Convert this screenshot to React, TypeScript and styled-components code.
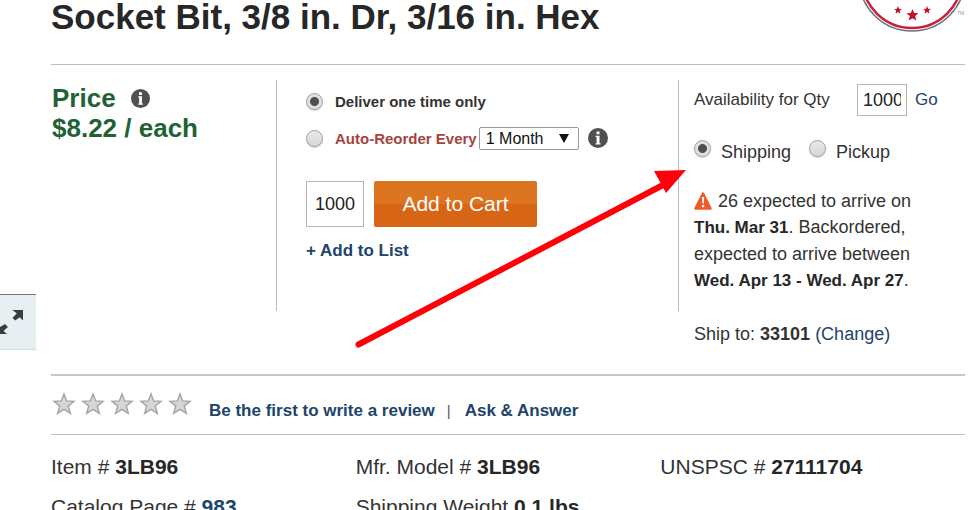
import React from "react";
import styled, { createGlobalStyle } from "styled-components";

const GlobalStyle = createGlobalStyle`
  * { box-sizing: border-box; }
  body {
    margin: 0;
    overflow: hidden;
    background: #fff;
    color: #333;
    font-family: "Liberation Sans", Arial, sans-serif;
    font-size: 18px;
  }
  button, input, select { font-family: inherit; }
`;

const Page = styled.div`
  display: flex;
  gap: 15px;
  padding-right: 10px;
`;

const Rail = styled.aside`
  flex: 0 0 36px;
  padding-top: 294px;
`;

const ExpandButton = styled.button`
  display: block;
  width: 100%;
  height: 56px;
  padding: 0;
  border: 0;
  border-top: 1px solid #777;
  border-bottom: 1px solid #d5dadd;
  background: #e8eff3;
`;

const Main = styled.main`
  position: relative;
  flex: 1;
  min-width: 0;
`;

const Header = styled.header`
  display: flex;
  justify-content: space-between;
  align-items: flex-start;
  height: 65px;
  border-bottom: 1px solid #bdbdbd;
`;

const Title = styled.h1`
  margin: 0;
  color: #272727;
  font-size: 35px;
  line-height: 34px;
`;

const BuyBox = styled.section`
  display: grid;
  grid-template-columns: 225fr 1px 401fr 1px 286fr;
  padding: 15px 0 27px;
  border-bottom: 2px solid #c8c8c8;
`;

const Divider = styled.div`
  height: 231px;
  background: #bdbdbd;
`;

const PriceColumn = styled.div`
  padding: 3px 0 0 1px;
  color: #1f6335;
  font-size: 26px;
  font-weight: bold;
  line-height: 30px;
`;

const PriceHeading = styled.div`
  display: flex;
  align-items: center;
  gap: 15px;
`;

const InfoButton = styled.button`
  display: flex;
  padding: 0;
  border: 0;
  background: none;
`;

const OrderColumn = styled.div`
  padding: 8px 0 0 29px;
`;

const OrderOption = styled.div`
  display: flex;
  align-items: center;
  height: 26px;
  margin-bottom: 11px;
`;

const OptionLabel = styled.label<{ $accent?: boolean }>`
  margin-left: 12px;
  color: ${(p) => (p.$accent ? "#a5433d" : "#333")};
  font-size: 15px;
  font-weight: bold;
`;

const Radio = styled.input.attrs({ type: "radio" })`
  appearance: none;
  flex: none;
  width: 17px;
  height: 17px;
  margin: 0;
  border: 1px solid #a0a0a0;
  border-radius: 50%;
  background: linear-gradient(#e9e9e9, #d7d7d7);
  box-shadow: 0 1px 1px #d0d0d0;
  &:checked {
    background: radial-gradient(circle, #505050 0 4px, #e0e0e0 5px);
  }
`;

const SelectWrap = styled.div`
  display: grid;
  grid-template-columns: 1fr 10px;
  align-items: center;
  width: 100px;
  height: 23px;
  margin: 0 9px 0 2px;
  padding-right: 9px;
  border: 1px solid #999;
  border-radius: 2px;
`;

const Select = styled.select`
  appearance: none;
  grid-area: 1 / 1 / 2 / 3;
  padding: 0 0 0 6px;
  border: 0;
  background: none;
  color: #111;
  font-size: 16px;
`;

const Caret = styled.svg`
  grid-area: 1 / 2;
  pointer-events: none;
`;

const CartRow = styled.div`
  display: flex;
  gap: 10px;
  padding-top: 19px;
`;

const QuantityInput = styled.input<{ $small?: boolean }>`
  width: ${(p) => (p.$small ? 50 : 58)}px;
  height: ${(p) => (p.$small ? 32 : 46)}px;
  padding: ${(p) => (p.$small ? "0 5px" : "0 8px")};
  border: 1px solid #b5b5b5;
  border-radius: 0;
  color: #222;
  font-size: 18px;
`;

const CartButton = styled.button`
  width: 163px;
  height: 46px;
  padding: 0;
  border: 0;
  border-radius: 2px;
  background: linear-gradient(#dd7420 50%, #d86416 50%);
  color: #fff;
  font-size: 21px;
`;

const Link = styled.a<{ $bold?: boolean; $inherit?: boolean }>`
  color: #20446a;
  font-weight: ${(p) => (p.$bold ? "bold" : "normal")};
  font-size: ${(p) => (p.$inherit ? "inherit" : "17px")};
  text-decoration: none;
`;

const ListAction = styled.div`
  margin-top: 13px;
  line-height: 20px;
`;

const ShippingColumn = styled.div`
  padding: 4px 0 0 15px;
  white-space: nowrap;
`;

const Availability = styled.div`
  display: flex;
  align-items: center;
  gap: 8px;
`;

const AvailabilityLabel = styled.label`
  width: 155px;
  font-size: 17px;
`;

const Methods = styled.div`
  display: flex;
  gap: 18px;
  margin-top: 24px;
`;

const Method = styled.div`
  display: flex;
  gap: 10px;
  height: 22px;
`;

const MethodLabel = styled.label`
  line-height: 24px;
`;

const Notice = styled.p`
  margin: 26px 0 0;
  line-height: 26px;
  strong {
    color: #272727;
    font-size: 17px;
  }
`;

const WarningIcon = styled.svg`
  margin-right: 6px;
  vertical-align: -3px;
`;

const ShipTo = styled.div`
  margin-top: 27px;
  line-height: 26px;
`;

const Reviews = styled.section`
  display: flex;
  gap: 17px;
  height: 59px;
  padding-top: 16px;
  border-bottom: 1px solid #bdbdbd;
`;

const Stars = styled.div`
  display: flex;
  gap: 5px;
  padding-left: 1px;
`;

const ReviewLinks = styled.div`
  padding-top: 6px;
  color: #555;
  line-height: 24px;
`;

const Separator = styled.span`
  margin: 0 14px 0 12px;
  font-size: 15px;
`;

const Details = styled.section`
  display: grid;
  grid-template-columns: repeat(3, 1fr);
  row-gap: 16px;
  padding-top: 20px;
  font-size: 21px;
  line-height: 24px;
  strong { color: #272727; }
`;

const Arrow = styled.svg`
  position: absolute;
  top: 167px;
  left: 304px;
  pointer-events: none;
`;

function InfoIcon({ size }: { size: number }) {
  return (
    <svg width={size} height={size} viewBox="0 0 20 20" aria-hidden="true">
      <circle cx="10" cy="10" r="10" fill="#505050" />
      <path d="M8.500 3.500h3v2.700h-3zM7.600 7.700h3.900v7.500h1v1.300H7.600v-1.300h1V9h-1z" fill="#fff" />
    </svg>
  );
}

function StarIcon() {
  return (
    <svg width="24" height="24" viewBox="0 0 24 24" aria-hidden="true">
      <path
        d="M12 2l2.700 6.900 7.300.4-5.700 4.700 2 7.400-6.300-4-6.300 4 2-7.400L2 9.300l7.300-.4z"
        fill="#d6d6d6"
        stroke="#a6a6a6"
        strokeWidth="1.5"
      />
    </svg>
  );
}

const STAR = "M0-6l1.700 4 4.300.3-3.300 2.800 1.100 4.500L0 3.200l-3.800 2.400 1.100-4.500L-6-1.700l4.300-.3z";

function Seal() {
  return (
    <svg width="103" height="34" viewBox="862 0 103 34" aria-hidden="true">
      <g fill="none">
        <circle cx="912" cy="-22" r="53" stroke="#6f6f74" strokeWidth="1.5" />
        <circle cx="912" cy="-22" r="50" stroke="#c8203a" strokeWidth="2.5" />
      </g>
      <g fill="#c4132f">
        <path d={STAR} transform="translate(912.5 15)" />
        <path d={STAR} transform="translate(898 10) scale(.65)" />
        <path d={STAR} transform="translate(927 10) scale(.65)" />
      </g>
      <text x="957" y="15" fontSize="5" fill="#8a9ba8">TM</text>
    </svg>
  );
}

export default function App() {
  return (
    <>
      <GlobalStyle />
      <Page>
        <Rail>
          <ExpandButton aria-label="Expand image">
            <svg width="36" height="54" viewBox="0 0 36 54" aria-hidden="true">
              <g fill="#3c3c3c">
                <path d="M12.500 15H23v10.500l-3.300-3.300-4.500 3.300-2.700-2.700 4.300-4.300z" />
                <path d="M-3 39V29l3 3 5-3 3 3-4.500 4L7 39z" />
              </g>
            </svg>
          </ExpandButton>
        </Rail>
        <Main>
          <Header>
            <Title>Socket Bit, 3/8 in. Dr, 3/16 in. Hex</Title>
            <Seal />
          </Header>

          <BuyBox>
            <PriceColumn>
              <PriceHeading>
                Price
                <InfoButton aria-label="Price information">
                  <InfoIcon size={19} />
                </InfoButton>
              </PriceHeading>
              $8.22 / each
            </PriceColumn>
            <Divider />
            <OrderColumn>
              <OrderOption>
                <Radio id="once" name="delivery" defaultChecked />
                <OptionLabel htmlFor="once">Deliver one time only</OptionLabel>
              </OrderOption>
              <OrderOption>
                <Radio id="auto" name="delivery" />
                <OptionLabel htmlFor="auto" $accent>Auto-Reorder Every</OptionLabel>
                <SelectWrap>
                  <Select aria-label="Reorder interval">
                    <option>1 Month</option>
                  </Select>
                  <Caret width="10" height="9" viewBox="0 0 10 9" aria-hidden="true">
                    <path d="M0 0h10L5 9z" fill="#111" />
                  </Caret>
                </SelectWrap>
                <InfoButton aria-label="Auto-reorder information">
                  <InfoIcon size={20} />
                </InfoButton>
              </OrderOption>
              <CartRow>
                <QuantityInput aria-label="Quantity" defaultValue="1000" />
                <CartButton>Add to Cart</CartButton>
              </CartRow>
              <ListAction>
                <Link href="#list" $bold>+ Add to List</Link>
              </ListAction>
            </OrderColumn>
            <Divider />
            <ShippingColumn>
              <Availability>
                <AvailabilityLabel htmlFor="qty">Availability for Qty</AvailabilityLabel>
                <QuantityInput id="qty" $small defaultValue="1000" />
                <Link href="#go">Go</Link>
              </Availability>
              <Methods>
                <Method>
                  <Radio id="shipping" name="method" defaultChecked />
                  <MethodLabel htmlFor="shipping">Shipping</MethodLabel>
                </Method>
                <Method>
                  <Radio id="pickup" name="method" />
                  <MethodLabel htmlFor="pickup">Pickup</MethodLabel>
                </Method>
              </Methods>
              <Notice>
                <WarningIcon width="18" height="18" viewBox="0 0 18 18" aria-hidden="true">
                  <path d="M9 1.500L16.500 16.500h-15z" fill="#f05a28" stroke="#f05a28" strokeWidth="2.500" strokeLinejoin="round" />
                  <path d="M8 5h2.200l-.4 6.500H8.400zM8 13h2.200v2.200H8z" fill="#fff" />
                </WarningIcon>
                26 expected to arrive on
                <br />
                <strong>Thu. Mar 31</strong>. Backordered,
                <br />
                expected to arrive between
                <br />
                <strong>Wed. Apr 13 - Wed. Apr 27</strong>.
              </Notice>
              <ShipTo>
                Ship to: <strong>33101</strong> <Link href="#change" $inherit>(Change)</Link>
              </ShipTo>
            </ShippingColumn>
          </BuyBox>

          <Reviews>
            <Stars role="img" aria-label="Not yet rated">
              {[1, 2, 3, 4, 5].map((n) => (
                <StarIcon key={n} />
              ))}
            </Stars>
            <ReviewLinks>
              <Link href="#review" $bold>Be the first to write a review</Link>
              <Separator>|</Separator>
              <Link href="#ask" $bold>Ask &amp; Answer</Link>
            </ReviewLinks>
          </Reviews>

          <Details>
            <div>Item # <strong>3LB96</strong></div>
            <div>Mfr. Model # <strong>3LB96</strong></div>
            <div>UNSPSC # <strong>27111704</strong></div>
            <div>Catalog Page # <Link href="#catalog" $bold $inherit>983</Link></div>
            <div>Shipping Weight <strong>0.1 lbs.</strong></div>
          </Details>

          <Arrow width="334" height="182" viewBox="0 0 334 182" aria-hidden="true">
            <path d="M3.500 177.500L308 18" stroke="#ff0008" strokeWidth="6" strokeLinecap="round" />
            <path d="M331 3L299 4l12 22z" fill="#ff0008" />
          </Arrow>
        </Main>
      </Page>
    </>
  );
}
